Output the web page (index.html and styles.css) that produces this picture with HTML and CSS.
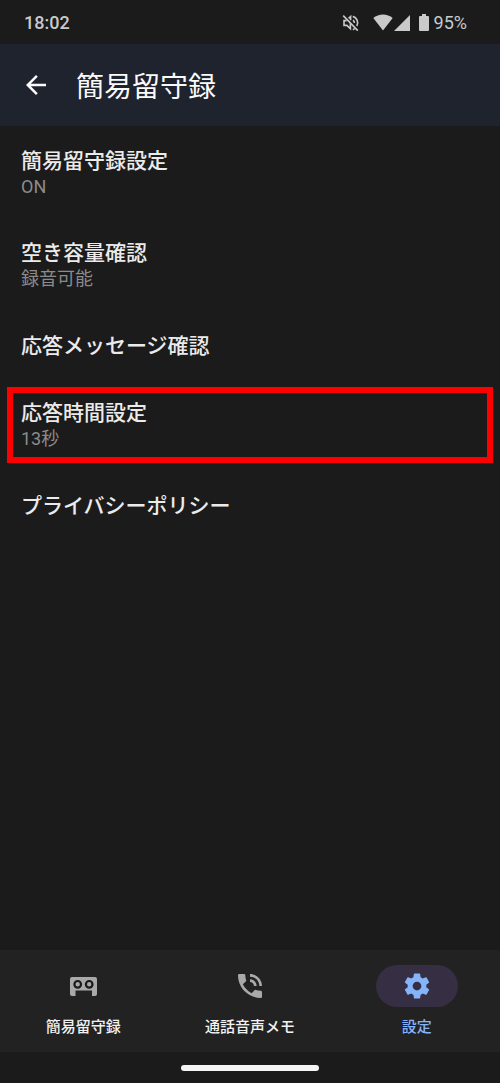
FILE: index.html
```
<!DOCTYPE html>
<html lang="ja">
<head>
<meta charset="utf-8">
<meta name="viewport" content="width=device-width, initial-scale=1">
<title>簡易留守録</title>
<link rel="stylesheet" href="styles.css">
</head>
<body>
<div class="screen">
  <div class="status">
    <time class="status-time">18:02</time>
    <div class="status-icons">
      <svg class="icon-mute" viewBox="0 0 18 18" aria-hidden="true">
        <g fill="none" stroke="currentColor" stroke-width="1.6">
          <path d="M1.2 1.6 15.8 16.6"/>
          <path d="M4.6 6.6H2V11.4H4.8L8.4 14.6V9.4"/>
          <path d="M6.6 4.4 8.6 2.6V6.2"/>
          <path d="M11 6.2Q12.4 7.2 12.4 9"/>
          <path d="M10.8 2.4C14.8 3.4 17 8 14.8 12"/>
          <path d="M10.8 15.6Q12 15.3 12.8 14.7"/>
        </g>
      </svg>
      <svg class="icon-wifi" viewBox="0 0 20 17" aria-hidden="true"><path fill="currentColor" d="M10 16.5 .3 4.1C5.600-.7 14.400-.7 19.700 4.100z"/></svg>
      <svg class="icon-signal" viewBox="0 0 16 16" aria-hidden="true"><path fill="currentColor" d="M0 16 16 0V16z"/></svg>
      <svg class="icon-battery" viewBox="0 0 10 17" aria-hidden="true"><path fill="currentColor" d="M3 0H7V2H9Q10 2 10 3V16Q10 17 9 17H1Q0 17 0 16V3Q0 2 1 2H3z"/></svg>
      <span class="battery-text">95%</span>
    </div>
  </div>
  <header class="appbar">
    <button class="back" type="button" aria-label="戻る">
      <svg class="icon-back" viewBox="0 0 24 24" aria-hidden="true"><path fill="currentColor" d="M20 11H7.830l5.590-5.590L12 4l-8 8 8 8 1.410-1.410L7.830 13H20v-2z"/></svg>
    </button>
    <h1 class="title">簡易留守録</h1>
  </header>
  <main class="list">
    <button class="row" type="button"><span class="row-title">簡易留守録設定</span><span class="row-sub">ON</span></button>
    <button class="row" type="button"><span class="row-title">空き容量確認</span><span class="row-sub">録音可能</span></button>
    <button class="row" type="button"><span class="row-title">応答メッセージ確認</span></button>
    <button class="row row-marked" type="button"><span class="row-title">応答時間設定</span><span class="row-sub">13秒</span></button>
    <button class="row" type="button"><span class="row-title">プライバシーポリシー</span></button>
  </main>
  <nav class="tabs">
    <button class="tab" type="button">
      <span class="pill"><svg class="icon-tape" viewBox="0 0 27 19" aria-hidden="true">
        <path fill="currentColor" d="M2 0H25Q27 0 27 2V17Q27 19 25 19H22V13.500H5.500V19H2Q0 19 0 17V2Q0 0 2 0z"/>
        <g fill="none" stroke="#191919" stroke-width="2.200"><circle cx="7.700" cy="7.300" r="3.300"/><circle cx="19.200" cy="7.300" r="3.300"/></g>
      </svg></span>
      <span class="tab-label">簡易留守録</span>
    </button>
    <button class="tab" type="button">
      <span class="pill"><svg class="icon-phone" viewBox="0 0 24 24" aria-hidden="true"><path fill="currentColor" d="M20 15.500c-1.250 0-2.450-.2-3.570-.57-.35-.11-.74-.03-1.020.24l-2.200 2.200c-2.830-1.440-5.150-3.750-6.590-6.590l2.200-2.210c.28-.26.36-.65.25-1C8.700 6.450 8.500 5.250 8.500 4c0-.55-.45-1-1-1H4c-.55 0-1 .45-1 1 0 9.390 7.610 17 17 17 .55 0 1-.45 1-1v-3.500c0-.55-.45-1-1-1zM19 12h2c0-4.970-4.030-9-9-9v2c3.870 0 7 3.130 7 7zm-4 0h2c0-2.760-2.240-5-5-5v2c1.660 0 3 1.340 3 3z"/></svg></span>
      <span class="tab-label">通話音声メモ</span>
    </button>
    <button class="tab tab-active" type="button" aria-current="page">
      <span class="pill"><svg class="icon-gear" viewBox="0 0 24 24" aria-hidden="true"><path fill="currentColor" d="M19.430 12.980c.04-.32.07-.64.07-.98s-.03-.66-.07-.98l2.110-1.650c.19-.15.24-.42.12-.64l-2-3.460c-.12-.22-.39-.3-.61-.22l-2.490 1c-.52-.4-1.080-.73-1.690-.98l-.38-2.650C14.460 2.180 14.250 2 14 2h-4c-.25 0-.46.18-.49.42l-.38 2.650c-.61.25-1.170.59-1.690.98l-2.490-1c-.23-.09-.49 0-.61.22l-2 3.460c-.13.22-.07.49.12.64l2.110 1.650c-.04.32-.07.65-.07.98s.03.66.07.98l-2.110 1.650c-.19.15-.24.42-.12.64l2 3.460c.12.22.39.3.61.22l2.490-1c.52.4 1.080.73 1.690.98l.38 2.650c.03.24.24.42.49.42h4c.25 0 .46-.18.49-.42l.38-2.650c.61-.25 1.170-.59 1.690-.98l2.490 1c.23.09.49 0 .61-.22l2-3.460c.12-.22.07-.49-.12-.64l-2.110-1.650zM12 15.500c-1.930 0-3.500-1.570-3.500-3.500s1.570-3.500 3.500-3.500 3.500 1.570 3.500 3.500-1.570 3.500-3.500 3.500z"/></svg></span>
      <span class="tab-label">設定</span>
    </button>
  </nav>
  <div class="gesture"><div class="handle"></div></div>
</div>
</body>
</html>
```
FILE: styles.css
```
* {
  box-sizing: border-box;
}

body {
  margin: 0;
  background: #1b1b1b;
  color: #ebebeb;
  font-family: Roboto, "Noto Sans CJK JP", sans-serif;
}

button {
  margin: 0;
  padding: 0;
  border: 0;
  background: none;
  color: inherit;
  font: inherit;
  text-align: left;
  cursor: pointer;
}

svg {
  display: block;
}

.screen {
  display: flex;
  flex-direction: column;
  min-height: 100vh;
}

.status {
  display: flex;
  align-items: center;
  justify-content: space-between;
  height: 44px;
  padding: 1px 33px 0 24px;
  color: #cacaca;
  font-size: 18px;
}

.status-time {
  font-weight: 500;
}

.status-icons {
  display: flex;
  align-items: center;
}

.icon-mute {
  width: 18px;
  height: 18px;
  margin-right: 13px;
}

.icon-wifi {
  width: 20px;
  height: 17px;
  margin-right: 1px;
}

.icon-signal {
  width: 16px;
  height: 16px;
  margin-right: 9px;
}

.icon-battery {
  width: 10px;
  height: 17px;
  margin-right: 5px;
}

.appbar {
  display: flex;
  align-items: center;
  gap: 25px;
  height: 82px;
  padding: 0 21px;
  background: #1f232e;
  color: #fafafa;
}

.icon-back {
  width: 30px;
  height: 30px;
}

.title {
  margin: 0;
  padding-top: 6px;
  font-size: 28px;
  font-weight: 400;
  line-height: 40px;
}

.list {
  display: flex;
  flex: 1;
  flex-direction: column;
  padding-top: 2px;
}

.row {
  display: flex;
  flex-direction: column;
  justify-content: center;
  position: relative;
  min-height: 68px;
  padding: 20px 21px;
  line-height: 26px;
}

.row-title {
  font-size: 21px;
  font-weight: 500;
}

.row-sub {
  color: #8b8b8b;
  font-size: 18px;
}

.row-marked::after {
  content: "";
  position: absolute;
  inset: 7px 7px 9px;
  border: 6px solid #ff0000;
}

.tabs {
  display: grid;
  grid-template-columns: repeat(3, 1fr);
  padding: 15px 0 13px;
  background: #222222;
}

.tab {
  display: flex;
  flex-direction: column;
  align-items: center;
  gap: 8px;
}

.pill {
  display: flex;
  align-items: center;
  justify-content: center;
  width: 82px;
  height: 42px;
  border-radius: 21px;
  color: #a9a9a9;
}

.tab-label {
  color: #f2f2f2;
  font-size: 15px;
  font-weight: 500;
  line-height: 24px;
}

.tab-active .pill {
  background: #362e42;
  color: #85b4fb;
}

.tab-active .tab-label {
  color: #85b4fb;
}

.icon-tape {
  width: 27px;
  height: 19px;
}

.icon-phone {
  width: 32px;
  height: 32px;
}

.icon-gear {
  width: 30px;
  height: 30px;
}

.gesture {
  display: flex;
  align-items: center;
  justify-content: center;
  height: 31px;
}

.handle {
  width: 138px;
  height: 6px;
  border-radius: 3px;
  background: #f5f5f5;
}
```
